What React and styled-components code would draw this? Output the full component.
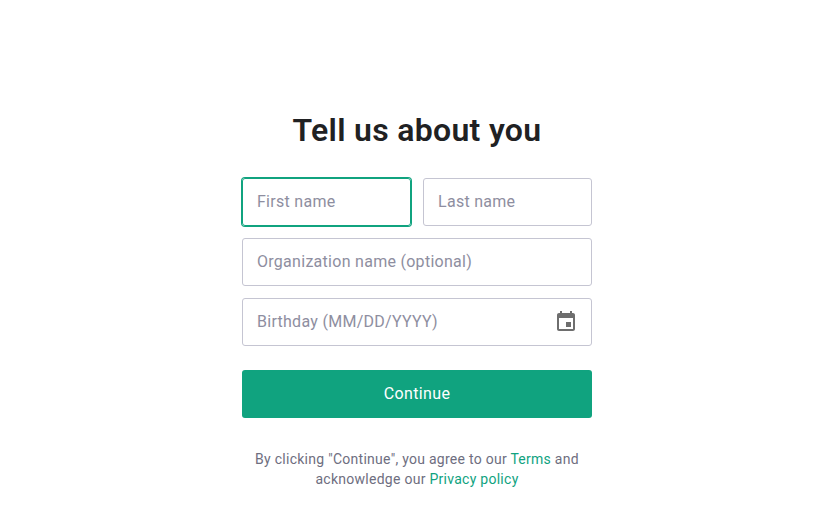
import React from "react";
import styled, { createGlobalStyle } from "styled-components";

const Global = createGlobalStyle`
  html, body { margin: 0; padding: 0; background: #fff; }
  body { font-family: Roboto, Inter, "Liberation Sans", sans-serif; }
  input::placeholder { color: #8e8ea0; opacity: 1; }
`;

const Page = styled.main`
  width: 834px;
  height: 508px;
  box-sizing: border-box;
  padding-top: 112px;
  display: flex;
  flex-direction: column;
  align-items: center;
`;

const Title = styled.h1`
  margin: 0 0 30px;
  height: 36px;
  font-size: 32px;
  line-height: 36px;
  font-weight: 600;
  letter-spacing: 0.3px;
  color: #202123;
  text-align: center;
`;

const Form = styled.form`
  width: 350px;
  display: flex;
  flex-direction: column;
  gap: 12px;
`;

const Row = styled.div`
  display: flex;
  gap: 12px;
`;

const FieldBox = styled.div`
  flex: 1 0 48px;
  min-width: 0;
  height: 48px;
  box-sizing: border-box;
  display: flex;
  align-items: center;
  padding: 0 14px;
  border: 1px solid ${(p) => (p.$focused ? "#10a37f" : "#c5c5d2")};
  box-shadow: ${(p) => (p.$focused ? "0 0 0 1px #10a37f" : "none")};
  border-radius: 3px;
`;

const Input = styled.input`
  flex: 1;
  min-width: 0;
  border: 0;
  outline: 0;
  padding: 0 0 2px;
  background: transparent;
  font-family: inherit;
  font-size: 16px;
  letter-spacing: 0.28px;
  color: #2d333a;
`;

const CalendarIcon = styled.svg`
  width: 24px;
  height: 24px;
  flex: none;
  margin-right: -1px;
  fill: #6e6e6e;
`;

const Button = styled.button`
  margin-top: 12px;
  height: 48px;
  border: 0;
  border-radius: 3px;
  padding: 0 0 2px;
  background: #10a37f;
  color: #fff;
  font-family: inherit;
  font-size: 16px;
  font-weight: 400;
  letter-spacing: 0.36px;
`;

const Legal = styled.p`
  margin: 31px 0 0;
  font-size: 14px;
  line-height: 20px;
  letter-spacing: 0.27px;
  color: #6e6e80;
  text-align: center;
`;

const Link = styled.a`
  color: #10a37f;
  text-decoration: none;
`;

export default function App() {
  return (
    <>
      <Global />
      <Page>
        <Title>Tell us about you</Title>
        <Form>
          <Row>
            <FieldBox $focused>
              <Input placeholder="First name" />
            </FieldBox>
            <FieldBox>
              <Input placeholder="Last name" />
            </FieldBox>
          </Row>
          <FieldBox>
            <Input placeholder="Organization name (optional)" />
          </FieldBox>
          <FieldBox>
            <Input placeholder="Birthday (MM/DD/YYYY)" />
            <CalendarIcon viewBox="0 0 24 24">
              <path d="M17 12h-5v5h5v-5zM16 1v2H8V1H6v2H5c-1.11 0-1.99.9-1.99 2L3 19c0 1.1.89 2 2 2h14c1.1 0 2-.9 2-2V5c0-1.1-.9-2-2-2h-1V1h-2zm3 18H5V8h14v11z" />
            </CalendarIcon>
          </FieldBox>
          <Button type="button">Continue</Button>
        </Form>
        <Legal>
          By clicking "Continue", you agree to our <Link href="#">Terms</Link> and
          <br />
          acknowledge our <Link href="#">Privacy policy</Link>
        </Legal>
      </Page>
    </>
  );
}
